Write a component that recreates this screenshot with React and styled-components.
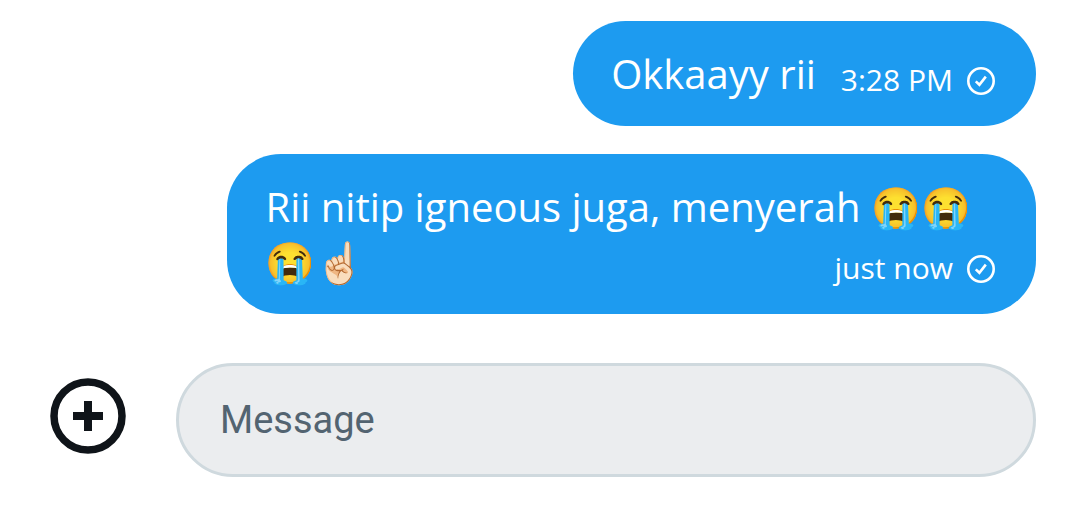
import React from "react";
import styled, { createGlobalStyle } from "styled-components";

const GlobalStyle = createGlobalStyle`
  * {
    box-sizing: border-box;
  }
  body {
    margin: 0;
    background-color: #ffffff;
    font-family: "Open Sans", "Noto Sans", sans-serif;
  }
`;

const Page = styled.main`
  padding: 21px 44px 40px 50px;
`;

const Messages = styled.ol`
  display: flex;
  flex-direction: column;
  align-items: flex-end;
  gap: 28px;
  margin: 0;
  padding: 0;
  list-style: none;
`;

const Bubble = styled.li`
  display: flow-root;
  max-width: 82%;
  padding: 25px 41px 25px 38px;
  border-radius: 54px;
  background-color: #1d9bf0;
  color: #ffffff;
  font-size: 40px;
  line-height: 55px;
`;

const Meta = styled.span`
  float: right;
  display: flex;
  align-items: center;
  gap: 14px;
  height: 40px;
  margin: 15px 0 0 25px;
  font-size: 30px;
  line-height: 36px;
`;

const Time = styled.time`
  padding-bottom: 2px;
`;

const Composer = styled.form`
  display: flex;
  align-items: flex-start;
  gap: 50px;
  margin-top: 49px;
`;

const AddButton = styled.button`
  display: flex;
  align-items: center;
  height: 106px;
  padding: 0;
  border: none;
  background: none;
  color: #0f1419;
`;

const Input = styled.input`
  flex: 1;
  min-width: 0;
  height: 114px;
  padding: 0 41px;
  border: 3px solid #cfd9de;
  border-radius: 57px;
  outline: none;
  background-color: #ebedef;
  color: #0f1419;
  font-family: Roboto, sans-serif;
  font-size: 38px;
  &::placeholder {
    color: #536471;
    opacity: 1;
  }
`;

const SentIcon = () => (
  <svg width="28" height="28" viewBox="0 0 28 28" fill="none" stroke="currentColor" aria-label="Sent">
    <circle cx="14" cy="14" r="12.7" strokeWidth="2.6" />
    <path d="M8.8 14.4l3.6 3.4 6.4-8.2" strokeWidth="2.6" />
  </svg>
);

const PlusIcon = () => (
  <svg width="76" height="76" viewBox="0 0 76 76" fill="none" stroke="currentColor">
    <circle cx="38" cy="38" r="34" strokeWidth="7.5" />
    <path d="M38 23v30M23 38h30" strokeWidth="8" />
  </svg>
);

const Message = ({ time, children }) => (
  <Bubble>
    {children}
    <Meta>
      <Time>{time}</Time>
      <SentIcon />
    </Meta>
  </Bubble>
);

export default () => (
  <React.Fragment>
    <GlobalStyle />
    <Page>
      <Messages>
        <Message time="3:28 PM">Okkaayy rii</Message>
        <Message time="just now">
          Rii nitip igneous juga, menyerah 😭😭😭☝🏻
        </Message>
      </Messages>
      <Composer onSubmit={event => event.preventDefault()}>
        <AddButton type="button" aria-label="Add attachment">
          <PlusIcon />
        </AddButton>
        <Input type="text" placeholder="Message" aria-label="Message" />
      </Composer>
    </Page>
  </React.Fragment>
);
